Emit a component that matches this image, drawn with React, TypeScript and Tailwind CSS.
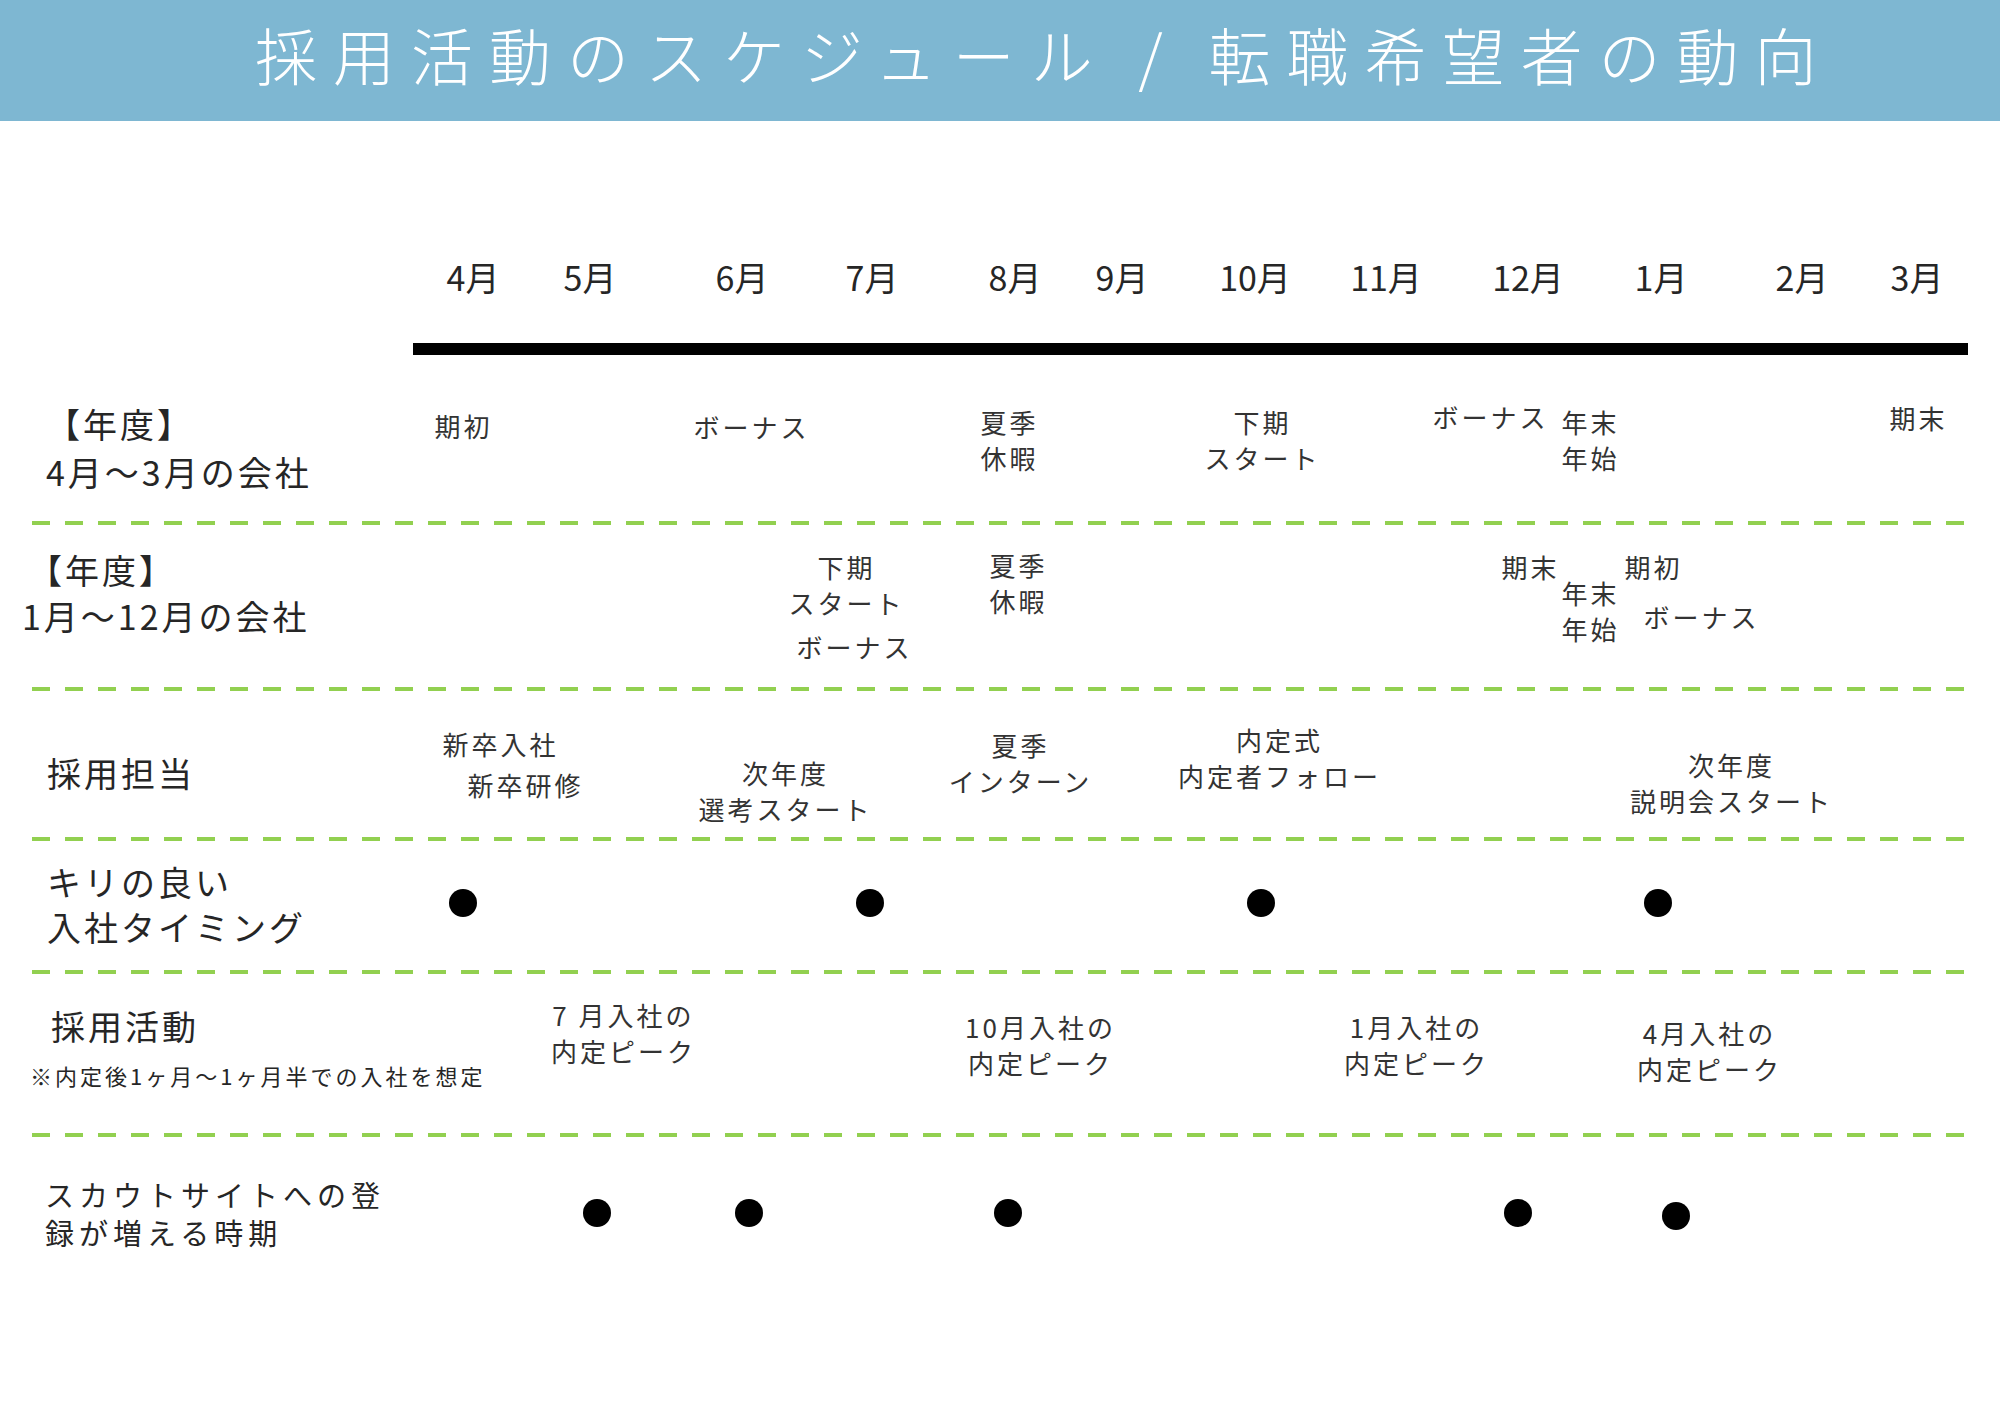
import React from 'react';

type Item = { x: number; y: number; lines: string[] };
type Dot = { x: number; y: number };

const font = { fontFamily: '"Noto Sans CJK JP", "Noto Sans", sans-serif' };

const months: { x: number; label: string }[] = [
    { x: 473, label: '4月' },
    { x: 590, label: '5月' },
    { x: 742, label: '6月' },
    { x: 872, label: '7月' },
    { x: 1015, label: '8月' },
    { x: 1122, label: '9月' },
    { x: 1255, label: '10月' },
    { x: 1386, label: '11月' },
    { x: 1528, label: '12月' },
    { x: 1661, label: '1月' },
    { x: 1802, label: '2月' },
    { x: 1917, label: '3月' },
];

// y は各行の上端からの、1行目の中心
const row1: Item[] = [
    { x: 462, y: 71, lines: ['期初'] },
    { x: 750, y: 72, lines: ['ボーナス'] },
    { x: 1008, y: 67, lines: ['夏季', '休暇'] },
    { x: 1261, y: 67, lines: ['下期', 'スタート'] },
    { x: 1489, y: 62, lines: ['ボーナス'] },
    { x: 1589, y: 67, lines: ['年末', '年始'] },
    { x: 1917, y: 63, lines: ['期末'] },
];

const row2: Item[] = [
    { x: 845, y: 42, lines: ['下期', 'スタート'] },
    { x: 853, y: 122, lines: ['ボーナス'] },
    { x: 1017, y: 40, lines: ['夏季', '休暇'] },
    { x: 1529, y: 42, lines: ['期末'] },
    { x: 1589, y: 68, lines: ['年末', '年始'] },
    { x: 1652, y: 42, lines: ['期初'] },
    { x: 1700, y: 92, lines: ['ボーナス'] },
];

const row3: Item[] = [
    { x: 499, y: 53, lines: ['新卒入社'] },
    { x: 524, y: 94, lines: ['新卒研修'] },
    { x: 784, y: 82, lines: ['次年度', '選考スタート'] },
    { x: 1019, y: 54, lines: ['夏季', 'インターン'] },
    { x: 1278, y: 49, lines: ['内定式', '内定者フォロー'] },
    { x: 1730, y: 74, lines: ['次年度', '説明会スタート'] },
];

const row5: Item[] = [
    { x: 622, y: 41, lines: ['7 月入社の', '内定ピーク'] },
    { x: 1039, y: 53, lines: ['10月入社の', '内定ピーク'] },
    { x: 1415, y: 53, lines: ['1月入社の', '内定ピーク'] },
    { x: 1708, y: 59, lines: ['4月入社の', '内定ピーク'] },
];

const row4Dots: Dot[] = [
    { x: 463, y: 62 },
    { x: 870, y: 62 },
    { x: 1261, y: 62 },
    { x: 1658, y: 62 },
];

const row6Dots: Dot[] = [
    { x: 597, y: 76 },
    { x: 749, y: 76 },
    { x: 1008, y: 76 },
    { x: 1518, y: 76 },
    { x: 1676, y: 79 },
];

const Events = ({ items }: { items: Item[] }) => (
    <>
        {items.map((e) => (
            <div
                key={`${e.x}-${e.y}`}
                className="absolute -translate-x-1/2 whitespace-nowrap pl-[3px] text-center text-[26px] leading-[36px] tracking-[3px] text-[#333333]"
                style={{ left: e.x, top: e.y - 18 }}
            >
                {e.lines.map((l) => (
                    <div key={l}>{l}</div>
                ))}
            </div>
        ))}
    </>
);

const Dots = ({ dots }: { dots: Dot[] }) => (
    <>
        {dots.map((d) => (
            <span
                key={d.x}
                className="absolute h-[28px] w-[28px] -translate-x-1/2 -translate-y-1/2 rounded-full bg-black"
                style={{ left: d.x, top: d.y }}
            />
        ))}
    </>
);

const Dash = () => (
    <div className="ml-[32px] h-[4px] w-[1937px] bg-[image:repeating-linear-gradient(to_right,#92d050_0px,#92d050_18px,transparent_18px,transparent_33px)]" />
);

const App = () => {
    return (
        <div className="h-[1414px] w-[2000px] overflow-hidden bg-white text-[#262626]" style={font}>
            <header className="flex h-[121px] items-center bg-[#7eb7d2] pb-[14px] pl-[255px]">
                <h1 className="whitespace-nowrap text-[62px] font-light leading-none tracking-[16px] text-white">
                    採用活動のスケジュール / 転職希望者の動向
                </h1>
            </header>

            <div className="relative h-[222px]">
                {months.map((m) => (
                    <span
                        key={m.label}
                        className="absolute top-[136px] -translate-x-1/2 whitespace-nowrap text-[34px] leading-[40px]"
                        style={{ left: m.x }}
                    >
                        {m.label}
                    </span>
                ))}
            </div>
            <div className="ml-[413px] h-[12px] w-[1555px] bg-black" />

            <section className="relative h-[166px]">
                <div className="pl-[46px] pt-[45px] text-[34px] leading-[48px] tracking-[3px]">
                    <div>【年度】</div>
                    <div>4月～3月の会社</div>
                </div>
                <Events items={row1} />
            </section>
            <Dash />

            <section className="relative h-[162px]">
                <div className="pt-[22px] text-[34px] leading-[46px] tracking-[3px]">
                    <div className="pl-[28px]">【年度】</div>
                    <div className="pl-[22px]">1月～12月の会社</div>
                </div>
                <Events items={row2} />
            </section>
            <Dash />

            <section className="relative h-[146px]">
                <div className="pl-[47px] pt-[62px] text-[34px] leading-[40px] tracking-[3px]">採用担当</div>
                <Events items={row3} />
            </section>
            <Dash />

            <section className="relative h-[129px]">
                <div className="pl-[47px] pt-[18px] text-[34px] leading-[45px] tracking-[3px]">
                    <div>キリの良い</div>
                    <div>入社タイミング</div>
                </div>
                <Dots dots={row4Dots} />
            </section>
            <Dash />

            <section className="relative h-[159px]">
                <div className="pt-[28px] tracking-[3px]">
                    <div className="pl-[51px] text-[34px] leading-[48px]">採用活動</div>
                    <div className="pl-[30px] text-[22px] leading-[50px]">※内定後1ヶ月～1ヶ月半での入社を想定</div>
                </div>
                <Events items={row5} />
            </section>
            <Dash />

            <section className="relative h-[277px]">
                <div className="pl-[45px] pt-[38px] text-[29px] leading-[38px] tracking-[5px]">
                    <div>スカウトサイトへの登</div>
                    <div>録が増える時期</div>
                </div>
                <Dots dots={row6Dots} />
            </section>
        </div>
    );
};

export default App;
